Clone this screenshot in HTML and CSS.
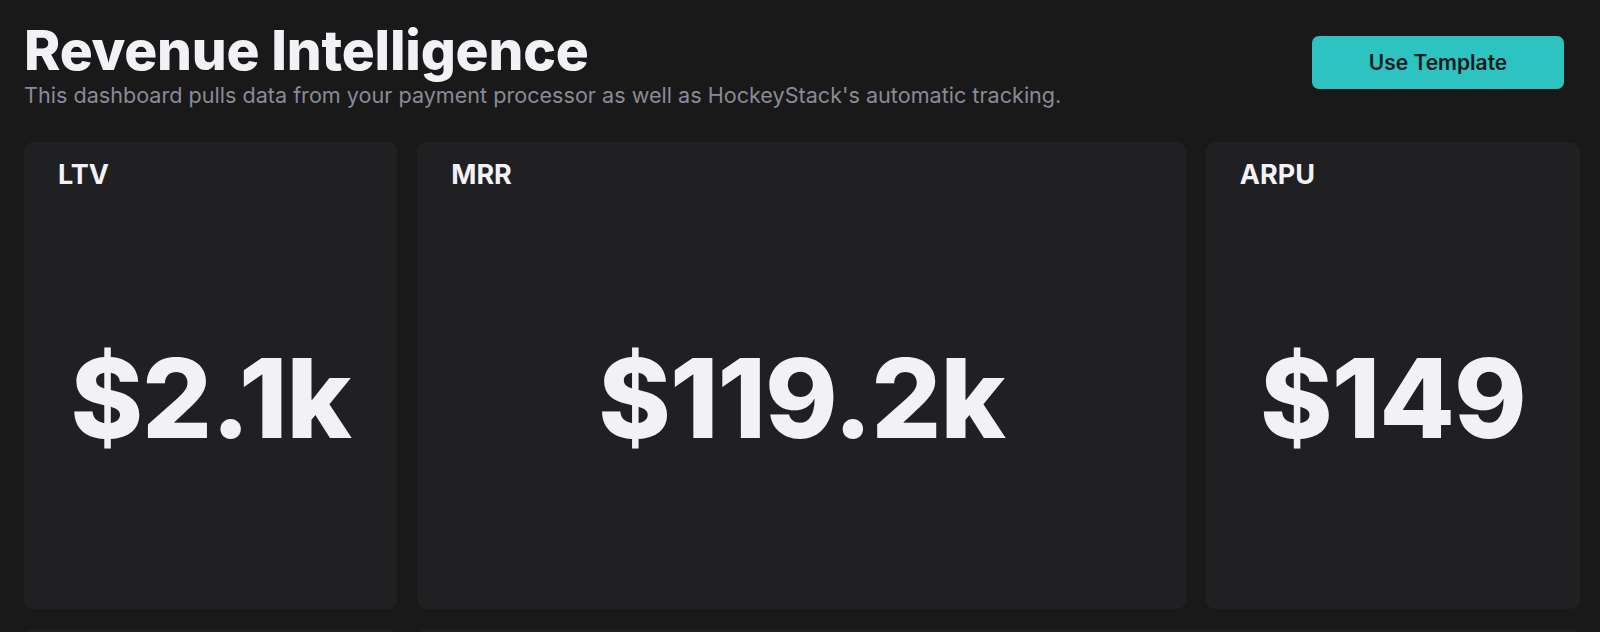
FILE: index.html
```html
<!DOCTYPE html>
<html lang="en">
<head>
<meta charset="utf-8">
<title>Revenue Intelligence</title>
<link rel="stylesheet" href="styles.css">
</head>
<body>
<div class="page">
  <header class="header">
    <div class="heading">
      <h1 class="title">Revenue Intelligence</h1>
      <p class="subtitle">This dashboard pulls data from your payment processor as well as HockeyStack's automatic tracking.</p>
    </div>
    <button class="btn-template" type="button">Use Template</button>
  </header>
  <main class="grid">
    <section class="card">
      <h2 class="card-label">LTV</h2>
      <div class="card-value">$2.1k</div>
    </section>
    <section class="card">
      <h2 class="card-label">MRR</h2>
      <div class="card-value">$119.2k</div>
    </section>
    <section class="card">
      <h2 class="card-label">ARPU</h2>
      <div class="card-value">$149</div>
    </section>
    <section class="card card-next"></section>
    <section class="card card-next card-wide"></section>
  </main>
</div>
</body>
</html>
```
FILE: styles.css
```css
* { box-sizing: border-box; }

html, body {
  margin: 0;
  padding: 0;
  background: #19191a;
}

body {
  font-family: Inter, "Noto Sans", "Liberation Sans", sans-serif;
  color: #f0f0f5;
  overflow: hidden;
  height: 632px;
}

.page {
  padding: 18px 36px 0 24px;
}

.header {
  display: flex;
  justify-content: space-between;
  align-items: flex-start;
}

.title {
  margin: 0;
  font-size: 55px;
  line-height: 64px;
  font-weight: 800;
  letter-spacing: -0.2px;
  color: #f1f1f6;
}

.subtitle {
  margin: 0;
  font-size: 21.6px;
  line-height: 26px;
  font-weight: 400;
  color: #8a8a97;
}

.btn-template {
  margin-top: 18px;
  width: 252px;
  height: 53px;
  border: 0;
  border-radius: 7px;
  background: #2cc3c1;
  color: #1b1a20;
  font-family: Inter, "Noto Sans", "Liberation Sans", sans-serif;
  font-size: 21px;
  font-weight: 600;
  cursor: pointer;
}

.grid {
  margin-top: 34px;
  margin-right: -16px;
  display: grid;
  grid-template-columns: 373fr 768fr 374fr;
  grid-auto-rows: 467px;
  gap: 20px;
}

.card {
  background: #202023;
  border-radius: 9px;
  padding: 17px 34px 0 34px;
  display: flex;
  flex-direction: column;
}

.card-label {
  margin: 0;
  font-size: 27px;
  line-height: 32px;
  font-weight: 700;
  color: #f1f1f6;
}

.card-value {
  flex: 1;
  display: flex;
  align-items: center;
  justify-content: center;
  padding-bottom: 4px;
  font-size: 110px;
  font-weight: 800;
  letter-spacing: -1px;
  color: #f1f1f6;
}

.card-wide {
  grid-column: span 2;
}
```
